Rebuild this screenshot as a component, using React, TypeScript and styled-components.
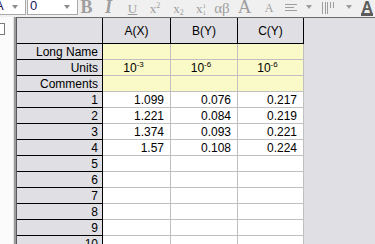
import styled, { createGlobalStyle } from 'styled-components';

const GlobalStyle = createGlobalStyle`
  html, body {
    margin: 0;
    padding: 0;
    background: #f0f0f0;
  }
  body {
    font-family: "Liberation Sans", Arial, sans-serif;
  }
`;

const Page = styled.div`
  width: 375px;
  height: 244px;
  overflow: hidden;
  display: flex;
  flex-direction: column;
  background: #f0f0f0;
`;

const Toolbar = styled.div`
  height: 16px;
  display: flex;
  align-items: stretch;
  flex-shrink: 0;
  overflow: hidden;
  background: #f0f0f0;
`;

const ComboBox = styled.div<{ $w: number; $ml?: number }>`
  width: ${(p) => p.$w}px;
  margin-left: ${(p) => p.$ml ?? 0}px;
  height: 15px;
  box-sizing: border-box;
  display: flex;
  align-items: center;
  background: #fff;
  border: 1px solid #a9a9a9;
  border-top: none;
  font-size: 13px;
  color: #1a1a60;
  flex-shrink: 0;
`;

const ComboText = styled.span<{ $ml: number }>`
  margin-left: ${(p) => p.$ml}px;
  flex: 1;
  line-height: 12px;
  margin-top: -2px;
`;

const ComboArrow = styled.span`
  width: 0;
  height: 0;
  margin-right: 7px;
  margin-top: -1px;
  border-left: 3px solid transparent;
  border-right: 3px solid transparent;
  border-top: 4px solid #8c8c8c;
`;

const Tool = styled.div<{ $w: number }>`
  width: ${(p) => p.$w}px;
  flex-shrink: 0;
  display: flex;
  justify-content: center;
  align-items: flex-end;
  padding-bottom: 2px;
  box-sizing: border-box;
  color: #9e9e9e;
  font-family: "Liberation Serif", "Times New Roman", serif;
  line-height: 1;
`;

const Glyph = styled.span<{ $size: number; $bold?: boolean; $italic?: boolean }>`
  font-size: ${(p) => p.$size}px;
  font-weight: ${(p) => (p.$bold ? 'bold' : 'normal')};
  font-style: ${(p) => (p.$italic ? 'italic' : 'normal')};
  line-height: 0.8;
`;

const Under = styled(Glyph)`
  text-decoration: underline;
`;

const Script = styled.span<{ $shift: number }>`
  font-size: 8px;
  position: relative;
  top: ${(p) => p.$shift}px;
  line-height: 0.8;
`;

const ScriptStack = styled.span`
  display: inline-flex;
  flex-direction: column;
  font-size: 7px;
  line-height: 7px;
  margin-bottom: -3px;
`;

const Arrow = styled.span`
  width: 0;
  height: 0;
  margin-bottom: 5px;
  border-left: 3px solid transparent;
  border-right: 3px solid transparent;
  border-top: 4px solid #9e9e9e;
`;

const FillA = styled.span`
  font-family: "Liberation Sans", Arial, sans-serif;
  font-weight: bold;
  font-size: 16px;
  color: #5c5c5c;
  line-height: 11px;
  border-bottom: 3px solid #5c5c5c;
  margin-bottom: -2px;
`;

const Workspace = styled.div`
  flex: 1;
  display: flex;
  min-height: 0;
  border-top: 1px solid #f0f0f0;
`;

const SidePanel = styled.div`
  width: 13px;
  flex-shrink: 0;
  background: #fbfbfb;
  padding-top: 6px;
  box-sizing: border-box;
`;

const PanelBox = styled.div`
  width: 10px;
  height: 10px;
  margin-left: -7px;
  border: 1px solid #7a7a7a;
  background: #fff;
`;

const Splitter = styled.div`
  width: 4px;
  flex-shrink: 0;
  box-sizing: border-box;
  border-left: 1px solid #e2e2e2;
  border-right: 1px solid #5a5a5a;
  background: #9c9c9c;
`;

const SheetArea = styled.div`
  flex: 1;
  border-top: 1px solid #6a6a6a;
  background: #dfdfe4;
  overflow: hidden;
`;

const Grid = styled.div`
  display: grid;
  grid-template-columns: 86px 68px 67px 66px;
  grid-template-rows: 26px;
  grid-auto-rows: 16px;
  width: max-content;
  font-size: 12px;
  color: #000;
`;

type CellKind = 'head' | 'rowhead' | 'label' | 'data';

const Cell = styled.div<{ $kind: CellKind; $align?: 'center' | 'right' }>`
  box-sizing: border-box;
  display: flex;
  align-items: center;
  justify-content: ${(p) => (p.$align === 'center' ? 'center' : 'flex-end')};
  padding: 1px ${(p) => (p.$kind === 'rowhead' ? 4 : p.$kind === 'head' ? 0 : 6)}px 0 0;
  white-space: nowrap;
  background: ${(p) =>
    p.$kind === 'head' || p.$kind === 'rowhead'
      ? '#dfdfe4'
      : p.$kind === 'label'
        ? '#fafac8'
        : '#ffffff'};
  border-right: 1px solid
    ${(p) => (p.$kind === 'head' || p.$kind === 'rowhead' ? '#000' : '#c0c0c0')};
  border-bottom: 1px solid
    ${(p) => (p.$kind === 'head' || p.$kind === 'rowhead' ? '#000' : '#c0c0c0')};
  line-height: 14px;
`;

const Power = styled.span`
  line-height: 14px;
`;

const Sup = styled.sup`
  font-size: 8px;
  line-height: 0;
  vertical-align: 5px;
`;

const columns = ['A(X)', 'B(Y)', 'C(Y)'];
const units = ['-3', '-6', '-6'];
const data: string[][] = [
  ['1.099', '0.076', '0.217'],
  ['1.221', '0.084', '0.219'],
  ['1.374', '0.093', '0.221'],
  ['1.57', '0.108', '0.224'],
];

export default function App() {
  const rows = Array.from({ length: 10 }, (_, i) => data[i] ?? ['', '', '']);

  return (
    <Page>
      <GlobalStyle />
      <Toolbar>
        <ComboBox $w={32} $ml={-6}>
          <ComboText $ml={0}>A</ComboText>
          <ComboArrow />
        </ComboBox>
        <ComboBox $w={51} $ml={1}>
          <ComboText $ml={2}>0</ComboText>
          <ComboArrow />
        </ComboBox>
        <Tool $w={17}><Glyph $size={18} $bold>B</Glyph></Tool>
        <Tool $w={27}><Glyph $size={18} $bold $italic>I</Glyph></Tool>
        <Tool $w={21}><Under $size={13}>U</Under></Tool>
        <Tool $w={24}>
          <Glyph $size={13}>x</Glyph>
          <Script $shift={-5}>2</Script>
        </Tool>
        <Tool $w={23}>
          <Glyph $size={13}>x</Glyph>
          <Script $shift={2}>2</Script>
        </Tool>
        <Tool $w={22}>
          <Glyph $size={13}>x</Glyph>
          <ScriptStack>
            <span>1</span>
            <span>1</span>
          </ScriptStack>
        </Tool>
        <Tool $w={20}><Glyph $size={15}>αβ</Glyph></Tool>
        <Tool $w={25}><Glyph $size={19}>A</Glyph></Tool>
        <Tool $w={24}><Glyph $size={12}>A</Glyph></Tool>
        <Tool $w={20}>
          <svg width="12" height="9" viewBox="0 0 12 9" style={{ marginBottom: 1 }}>
            <g stroke="#9e9e9e" strokeWidth="1">
              <line x1="0" y1="0.5" x2="12" y2="0.5" />
              <line x1="0" y1="3.5" x2="9" y2="3.5" />
              <line x1="0" y1="6.5" x2="12" y2="6.5" />
            </g>
          </svg>
        </Tool>
        <Tool $w={16}><Arrow /></Tool>
        <Tool $w={24}>
          <svg width="14" height="12" viewBox="0 0 14 12">
            <g stroke="#9e9e9e" strokeWidth="1">
              <line x1="0.5" y1="0" x2="0.5" y2="12" />
              <line x1="3.5" y1="0" x2="3.5" y2="12" />
              <line x1="5.5" y1="0" x2="5.5" y2="12" />
              <line x1="8.5" y1="0" x2="8.5" y2="6" />
              <line x1="11.5" y1="0" x2="11.5" y2="6" />
            </g>
          </svg>
        </Tool>
        <Tool $w={15}><Arrow /></Tool>
        <Tool $w={22}><FillA>A</FillA></Tool>
      </Toolbar>
      <Workspace>
        <SidePanel>
          <PanelBox />
        </SidePanel>
        <Splitter />
        <SheetArea>
          <Grid>
            <Cell $kind="head" />
            {columns.map((c) => (
              <Cell key={c} $kind="head" $align="center">{c}</Cell>
            ))}
            <Cell $kind="rowhead">Long Name</Cell>
            {columns.map((c) => (
              <Cell key={c} $kind="label" />
            ))}
            <Cell $kind="rowhead">Units</Cell>
            {units.map((u, i) => (
              <Cell key={i} $kind="label" $align="center">
                <Power>
                  10<Sup>{u}</Sup>
                </Power>
              </Cell>
            ))}
            <Cell $kind="rowhead">Comments</Cell>
            {columns.map((c) => (
              <Cell key={c} $kind="label" />
            ))}
            {rows.map((r, i) => [
              <Cell key={`h${i}`} $kind="rowhead">{i + 1}</Cell>,
              ...r.map((v, j) => (
                <Cell key={`${i}-${j}`} $kind="data">{v}</Cell>
              )),
            ])}
          </Grid>
        </SheetArea>
      </Workspace>
    </Page>
  );
}
